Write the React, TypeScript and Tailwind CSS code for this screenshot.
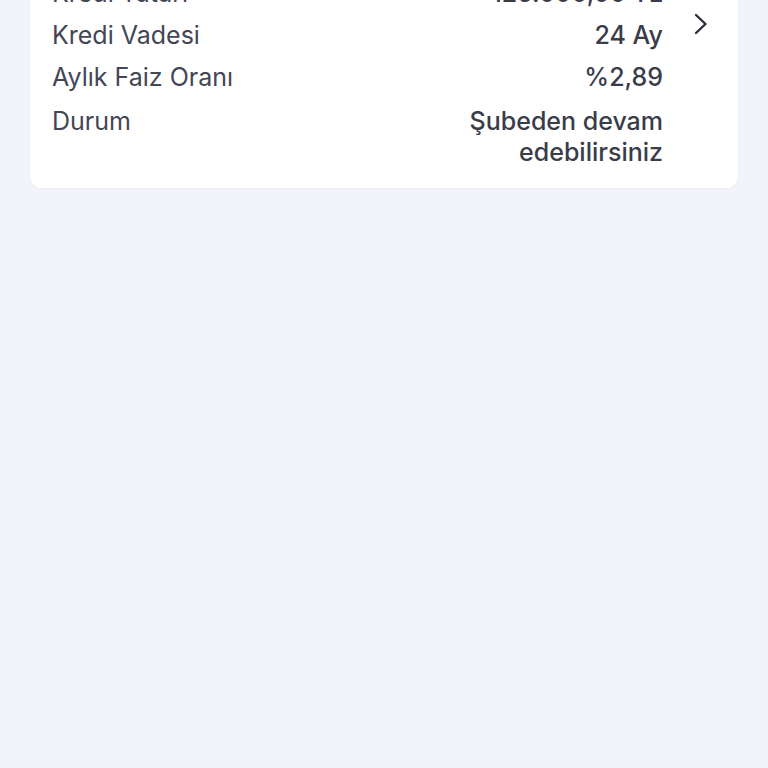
import React from 'react';

const rows = [
  { label: 'Kredi Tutarı', value: '125.000,00 TL' },
  { label: 'Kredi Vadesi', value: '24 Ay' },
  { label: 'Aylık Faiz Oranı', value: '%2,89' },
  { label: 'Durum', value: 'Şubeden devam edebilirsiniz' },
];

export default function App() {
  return (
    <div className="min-h-[768px] w-full overflow-hidden bg-[#f3f4f9]" style={{ fontFamily: 'Inter, "Noto Sans", sans-serif' }}>
      <div className="mx-[30px] mt-[-38px] flex rounded-[12px] bg-white pb-[20px] pl-[22px] pr-[30px] pt-[16px] shadow-[0_1px_2px_rgba(0,0,0,0.03)]">
        <div className="flex flex-1 flex-col gap-[11px]">
          {rows.map((r) => (
            <div key={r.label} className={`flex justify-between gap-4 text-[25px] leading-[31px] ${r.label === 'Durum' ? 'mt-[2px]' : ''}`}>
              <span className="text-[#434655]">{r.label}</span>
              <span className="max-w-[210px] text-right font-medium text-[#393c49]">{r.value}</span>
            </div>
          ))}
        </div>
        <div className="flex w-[45px] justify-end pt-[35px]">
          <svg width="14" height="22" viewBox="0 0 14 22" fill="none">
            <path d="M2 2l9.5 9L2 20" stroke="#2b2e3a" strokeWidth="2.4" strokeLinecap="round" strokeLinejoin="round" />
          </svg>
        </div>
      </div>
    </div>
  );
}
